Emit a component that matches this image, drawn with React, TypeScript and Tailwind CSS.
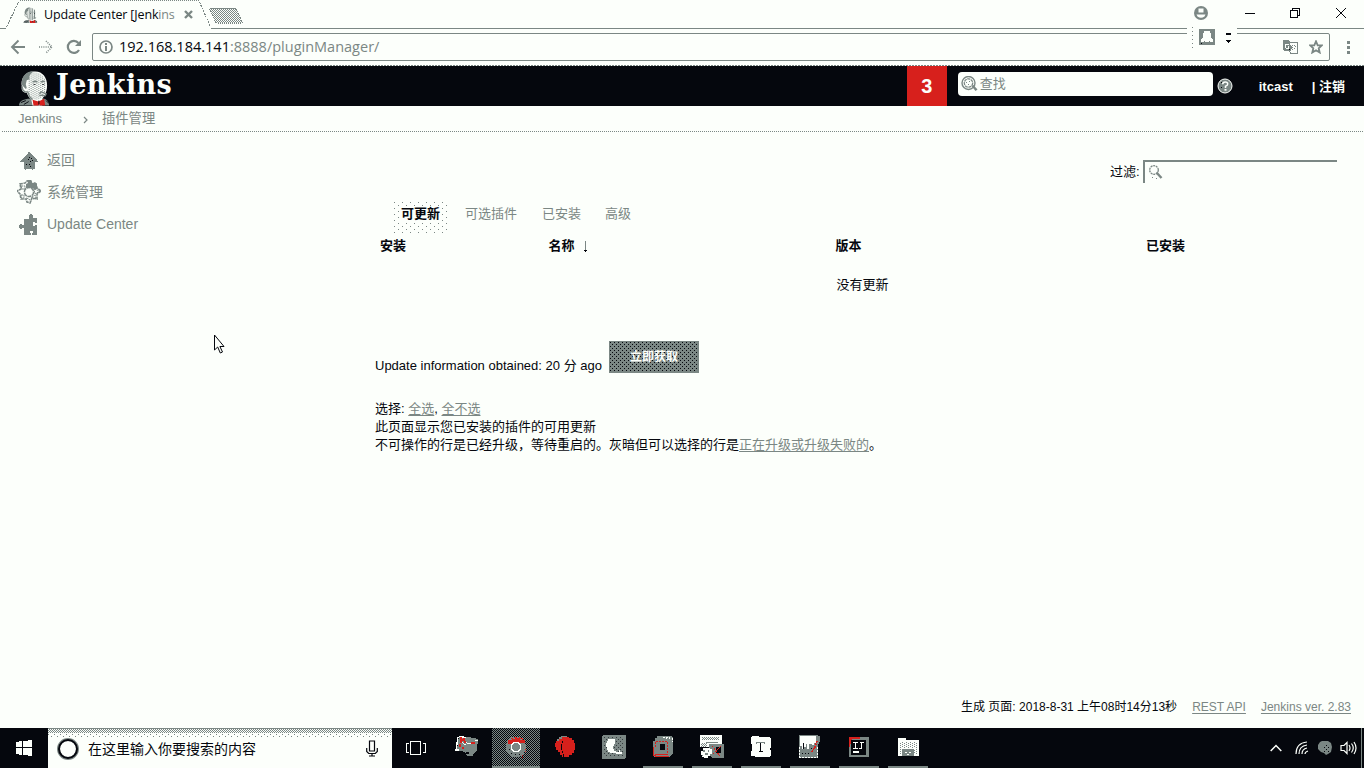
import React from "react";

const G = "#7b8784";
const W = "#fcfffb";
const K = "#05070d";
const R = "#d7201c";

function Svg({ w, h, className = "", children }: { w: number; h: number; className?: string; children: React.ReactNode }) {
  return (
    <svg width={w} height={h} viewBox={`0 0 ${w} ${h}`} fill="none" className={`block shrink-0 ${className}`}>
      {children}
    </svg>
  );
}

function Patterns() {
  return (
    <svg width="0" height="0" className="absolute">
      <defs>
        <pattern id="dotsGray" width="4" height="4" patternUnits="userSpaceOnUse">
          <path d="M0 0h1v1H0zM2 1h1v1H2zM0 2h1v1H0zM2 3h1v1H2z" fill={G} shapeRendering="crispEdges" />
        </pattern>
        <pattern id="dotsBlack" width="4" height="4" patternUnits="userSpaceOnUse">
          <path d="M0 0h1v1H0zM2 2h1v1H2z" fill={K} shapeRendering="crispEdges" />
        </pattern>
        <pattern id="check" width="2" height="2" patternUnits="userSpaceOnUse">
          <path d="M0 0h1v1H0zM1 1h1v1H1z" fill={G} shapeRendering="crispEdges" />
        </pattern>
      </defs>
    </svg>
  );
}

function TabOutline() {
  return (
    <Svg w={1364} h={29} className="absolute left-0 top-0">
      <g shapeRendering="crispEdges">
        <path d="M0 28.500H6M211 28.500H1187M1237 28.500H1364" stroke={G} />
        <path d="M20 0.500H199" stroke={G} strokeDasharray="1 1" />
        <path d="M6.500 27L18.500 2M199.500 2L210.500 27" stroke={G} strokeDasharray="2 1" />
        <path d="M211 8h23q2 0 3 2l5 11q1 2-1 2h-23q-2 0-3-2l-5-11q-1-2 1-2z" fill="url(#check)" stroke={G} strokeDasharray="1 1" />
      </g>
    </Svg>
  );
}

function Butler({ w, h, className }: { w: number; h: number; className?: string }) {
  return (
    <svg width={w} height={h} viewBox="0 0 32 36" className={`block shrink-0 ${className ?? ""}`}>
      <path d="M0 36c0-4 3-6 9-7l13-1c6 1 9 3 9 8z" fill={G} />
      <path d="M12 27l12 0 0 9H14z" fill={W} />
      <path d="M3 17C1 8 7 1 15 1c9-1 14 6 14 14 0 9-4 16-11 16-6 0-8-3-10-8-4 0-6-3-5-6z" fill={W} />
      <path d="M10 3C17-1 29 4 28 16c0 8-4 14-10 14-5 0-8-5-9-9z" fill="url(#dotsGray)" />
      <path d="M3 15C2 8 6 2 12 1l3 0C11 4 10 6 11 9l-3 1-1 4 1 4-1 1-3-3z" fill={G} />
      <path d="M3 16l1 4 2 2 3 0 2 5 3 3" stroke={G} fill="none" strokeWidth="1.500" />
      <path d="M14 12q3-2 5 0M22.500 12q3-2 4 0M21 24l2-2 5 2-1 2q-4-1-6 0" stroke={G} fill="none" strokeWidth="1.400" />
      <path d="M15 14h2v1h-2zM24 14h2v1h-2z" fill={K} />
      <path d="M2 33l5-2M5 35l5-3M28 31l3 3" stroke={K} strokeWidth="1" />
      <path d="M14 30l6 2 6-3 1 7h-5l-1-1-1 1h-5z" fill={R} />
      <path d="M20.500 31v4" stroke={K} />
    </svg>
  );
}

function BackIcon() {
  return <Svg w={16} h={16}><path d="M15 8H2M8.500 1.500L2 8l6.500 6.500" stroke={G} strokeWidth="1.900" /></Svg>;
}
function ForwardIcon() {
  return <Svg w={16} h={16}><path d="M1 8h12M8 2l6 6-6 6" stroke={G} strokeWidth="1.600" strokeDasharray="1 1.200" /></Svg>;
}
function ReloadIcon() {
  return <Svg w={16} h={16}><path d="M13 11a6 6 0 1 1-.6-7" stroke={G} strokeWidth="2.200" /><path d="M15 1v6H9z" fill={G} /></Svg>;
}
function InfoIcon() {
  return <Svg w={14} h={14}><circle cx="7" cy="7" r="6" stroke={G} strokeWidth="1.700" /><path d="M6 3h2v2H6zM6 6h2v5H6z" fill={G} /></Svg>;
}
function UserCircle() {
  return <Svg w={14} h={14}><circle cx="7" cy="7" r="7" fill={G} /><path d="M4.500 2.500h5v4h-5zM2.500 8.500h9l-1 2q-3.500 2.500-7 0z" fill={W} /></Svg>;
}
function TranslateIcon() {
  return (
    <Svg w={15} h={14} className="[shape-rendering:crispEdges]">
      <path d="M0 0h6l1 2v2l2 3-1 4H1L0 9z" fill={G} />
      <path d="M6 2.500h8v11H8l-2-3" stroke={G} />
      <path d="M5.500 4H3L2 5v2l1 1h2.500V6" stroke={W} />
      <path d="M9 5h3v2l-1 2-2 1M9 7v3" stroke={G} strokeDasharray="1 1" />
      <path d="M6 9h1v1H6z" fill={K} />
    </Svg>
  );
}
function StarIcon() {
  return <Svg w={14} h={14}><path d="M7 1.300l1.700 4H13L9.700 8.200l1 4.300L7 10.200l-3.700 2.300 1-4.300L1 5.300h4.300z" stroke={G} strokeWidth="1.800" /></Svg>;
}
function SearchOrb() {
  return (
    <Svg w={17} h={16}>
      <circle cx="7.500" cy="7" r="6.500" stroke={G} strokeWidth="1.400" />
      <circle cx="7.500" cy="7" r="4.200" stroke={G} strokeWidth="1.300" strokeDasharray="3 .6" />
      <path d="M5 6h1v1H5zM8 5h1v1H8zM7 8h1v1H7z" fill={G} />
      <path d="M10.500 10l2-1 4 4.500-2 1.500z" fill={G} />
    </Svg>
  );
}
function HelpOrb() {
  return (
    <Svg w={16} h={16}>
      <circle cx="8" cy="8" r="7" fill={G} stroke={W} strokeWidth="1" />
      <path d="M5.700 6.300q0-2.300 2.500-2.300t2.500 2q0 1.500-2.200 2.300V10" stroke={W} strokeWidth="1.500" />
      <path d="M7.500 11h2v1.700h-2z" fill={W} />
      <path d="M4 4h1v1H4zM4 9h1v1H4z" fill={K} />
    </Svg>
  );
}
function UpIcon() {
  return (
    <Svg w={18} h={18} className="[shape-rendering:crispEdges]">
      <path d="M8 0h2v1h1v1h1v1h1v1h1v1h1v1h1v1h1v2h1v1h-3v7h-2v1h-1v-1H6v1H5v-1H4v-7H0V9h1V8h1V7h1V6h1V5h1V4h1V3h1V2h1z" fill={G} />
      <path d="M9 5h1v1H9zM11 6h1v1h-1zM8 7h1v1H8zM12 8h1v1h-1zM10 9h1v1h-1zM6 12h1v1H6zM9 12h1v1H9zM10 14h1v1h-1z" fill={K} />
    </Svg>
  );
}
function GearIcon() {
  return (
    <Svg w={24} h={24}>
      <path d="M10 1h4l1 4 4-1 1 4 4 3-4 3 0 5-5-1-2 5-3-1-1-3-5 0-1-5-3-3 4-2-1-5 5-1z" stroke={G} strokeWidth="1.600" strokeDasharray="3 .6" />
      <path d="M4 6h4v3H5zM4 15h3v3H4zM15 17l3-2 1 3-3 1zM17 9l6 2-5 3zM9 18l3 1 2 3" stroke={G} strokeDasharray="2 .7" />
      <path d="M10 0h4v3h2l2-1 2 2v5h-3l-2-1h-4l-2 1V4l2-1z" fill={G} />
      <circle cx="12" cy="12" r="4.600" stroke={G} fill={W} strokeWidth="1.500" strokeDasharray="4 .7" />
    </Svg>
  );
}
function PuzzleIcon() {
  return (
    <Svg w={19} h={21} className="[shape-rendering:crispEdges]">
      <path d="M11 0h2v1h1v3h4v5h-2V8h-2v4h2v-1h2v10h-5v-2h1v-2h-3v2h1v2H5v-7H3v1H1v-1H0v-3h1v-1h2v1h2V5h5V1h1z" fill={G} />
    </Svg>
  );
}
function Lens() {
  return (
    <Svg w={14} h={15}>
      <circle cx="5" cy="5" r="4.300" stroke={G} strokeWidth="1.300" strokeDasharray="2 .7" />
      <path d="M7.500 7.500l5 5.500" stroke={G} strokeWidth="2.400" />
      <path d="M3 12h1v1H3zM7 13h1v1H7z" fill={G} />
    </Svg>
  );
}

function WindowsIcon() {
  return <Svg w={16} h={16} className="[shape-rendering:crispEdges]"><path d="M0 2l6-1v6H0zM7 1l9-1v7H7zM0 8h6v7l-6-1zM7 8h9v8l-9-1z" fill={W} /></Svg>;
}
function MicIcon() {
  return <Svg w={12} h={17}><path d="M3.500 1h5v10h-5zM.7 8v3.500l2 2h6.600l2-2V8M6 13.500V16M3 16h6" stroke={K} strokeWidth="1.200" /></Svg>;
}
function TaskViewIcon() {
  return <Svg w={20} h={14} className="[shape-rendering:crispEdges]"><path d="M4.500.5h10v13h-10zM3 2.500H.5v9H3M17 2.500h2.500v9H17" stroke={W} /></Svg>;
}

function MailApp() {
  return (
    <Svg w={24} h={24} className="[shape-rendering:crispEdges]">
      <path d="M4 1l10 1 9 2-1 11-3 3-1 3h-6l-2-4-8-2z" fill={G} />
      <path d="M3 2L1 15h3M4 1.500l7 1" stroke={W} strokeWidth="1.300" />
      <path d="M6 7l5 3M9 6l4 3 3-1M20 5h3" stroke={W} />
      <path d="M5 2h2v2h1V3h2v3h1v2H9V6H7v2H5zM4 9h2v3H4zM7 12h2v2H7zM16 7h4v2h-4z" fill={R} />
      <path d="M11 17h3v2h-3z" fill={K} />
    </Svg>
  );
}
function ChromeApp() {
  return (
    <Svg w={24} h={24} className="[shape-rendering:crispEdges]">
      <path d="M8 2h8l4 3 2 5v5l-3 5-4 2H9l-5-3-2-4V9l2-5z" fill={G} />
      <path d="M4 5h3V3h3V2h6v1h3v2h2v3H9v2H7V9H4z" fill={R} />
      <path d="M6 4h2v1H6zM9 3h2v1H9zM13 2h2v1h-2zM16 4h2v1h-2z" fill={G} />
      <path d="M21 14v4M18 20v3" stroke={R} strokeDasharray="1 1" />
      <path d="M5 14h1v1H5zM7 18h1v1H7zM11 19h1v1h-1zM15 19h1v1h-1z" fill={K} />
      <circle cx="12" cy="12" r="4.700" stroke={W} strokeWidth="1.500" fill={G} />
    </Svg>
  );
}
function RedApp() {
  return (
    <Svg w={24} h={24} className="[shape-rendering:crispEdges]">
      <path d="M8 1h6v2h-4v1H8v2H4V4h2V2h2z" fill={G} />
      <path d="M2 8h1V6h3V4h3V2h7v1h3v2h2v3h1v7h-1v3h-2v2h-3v2H9v-2H7v-3H5v-2H3v-3H2z" fill={R} />
      <path d="M9 6v2M8 9v6M9 16v2M10.500 19v3M6 17v2M4 15v1" stroke={K} />
    </Svg>
  );
}
function NoteApp() {
  return (
    <Svg w={24} h={24} className="[shape-rendering:crispEdges]">
      <rect width="24" height="24" rx="2" fill={G} />
      <path d="M2 2h20v20H2z" fill="url(#dotsBlack)" opacity=".6" />
      <path d="M6 4h7v5h-1v2h-1v3h1v2h2v2H8v-1H6v-2H5v-3H4V8h1V6h1z" fill={W} />
      <path d="M14 17h3v-2h1v2h2v2h-6z" fill={W} />
    </Svg>
  );
}
function CubeApp() {
  return (
    <Svg w={24} h={24} className="[shape-rendering:crispEdges]">
      <path d="M6 1h15l1 2v15l-4 4H3l-1-3V6h2V3h2z" fill={G} />
      <path d="M12 2.500h7M15.500 2v3M18.500 2v3M21 3v4" stroke={W} strokeDasharray="2 1" />
      <path d="M4.500 6.500h12v13M4.500 7v5" stroke={R} strokeDasharray="2 1" />
      <path d="M9 9h5v6H9z" fill={K} />
      <path d="M2.500 12v8h2v1.500h13M4 19.500h13" stroke={R} />
    </Svg>
  );
}
function ToolsApp() {
  return (
    <Svg w={24} h={24} className="[shape-rendering:crispEdges]">
      <path d="M0 0h22v9H0zM0 9h10v3H0z" fill={W} />
      <path d="M2 2h17v3H2zM1 8h6v4H1z" fill="url(#check)" />
      <path d="M6 7h12" stroke={G} />
      <path d="M9 9h15v14H12l-3-3z" fill={G} />
      <path d="M3 13h7v1h2v5h-2v2H8v2H4v-1H2v-2H1v-4h2z" fill={W} />
      <path d="M3 15h2v2H3zM8 15h1v2H8zM5 18h3v2H5zM2 20h1v1H2z" fill={G} />
      <path d="M16 12h5v6h-5z" fill={K} />
      <path d="M12 11l8 10M13 19l8-8" stroke={R} strokeDasharray="2 1" />
    </Svg>
  );
}
function TyporaApp() {
  return (
    <Svg w={24} h={24} className="[shape-rendering:crispEdges]">
      <path d="M3 1h7v1h11v1h1v10h-1v2h1v6h-1v1H6v-1H2v-5h1V9H2V2h1z" fill={W} />
      <path d="M7 7.500h9M7.500 7v2M15.500 7v2" stroke={G} />
      <path d="M11.500 8v8M10 16.500h4" stroke={K} />
    </Svg>
  );
}
function NotebookApp() {
  return (
    <Svg w={24} h={24} className="[shape-rendering:crispEdges]">
      <path d="M1 0h19v23H1z" fill={G} />
      <path d="M2 1h16v7h-2v2h-2V9h-3v5H9V9H8v3H6v2H4v-3H2z" fill={W} />
      <path d="M1.500 12v10h18V9" stroke={W} strokeDasharray="2 1" />
      <path d="M5.500 8v6M4 18.500h1M7 18.500h1M10 18.500h1M13 13.500h1" stroke={K} />
      <path d="M21.500 1l-1 6-4 9" stroke={G} strokeWidth="2" />
      <path d="M19 6l-2 6-3 5" stroke={R} strokeWidth="1.500" strokeDasharray="2 .6" />
    </Svg>
  );
}
function IdeaApp() {
  return (
    <Svg w={24} h={24} className="[shape-rendering:crispEdges]">
      <path d="M2 2h20v20H2z" fill={G} />
      <path d="M2 2h11v2H5v5H3v3H2z" fill={R} />
      <path d="M4 5h15v15H4z" fill={K} />
      <path d="M6 7.500h5M8.500 7v6M6 13.500h5M14.500 7v6M12 13.500h3M13 7.500h4" stroke={W} />
      <path d="M6 16h6v2H6z" fill={W} />
    </Svg>
  );
}
function FolderApp() {
  return (
    <Svg w={24} h={24} className="[shape-rendering:crispEdges]">
      <path d="M2 3h8v2h13v16H2z" fill={W} />
      <path d="M3 7h19v6H3zM3 14h3v5H3zM18 14h4v5h-4z" fill="url(#dotsGray)" />
      <path d="M6 14h12v7H6z" fill={G} />
      <path d="M9 17h2v1H9zM13 17h2v1h-2zM11 19h2v1h-2z" fill={W} />
    </Svg>
  );
}

const apps: { icon: () => React.ReactElement; state: string }[] = [
  { icon: MailApp, state: "" },
  { icon: ChromeApp, state: "active" },
  { icon: RedApp, state: "" },
  { icon: NoteApp, state: "" },
  { icon: CubeApp, state: "open" },
  { icon: ToolsApp, state: "open" },
  { icon: TyporaApp, state: "open" },
  { icon: NotebookApp, state: "open" },
  { icon: IdeaApp, state: "open" },
  { icon: FolderApp, state: "open" },
];

function BrowserChrome() {
  return (
    <header className="relative">
      <TabOutline />
      <div className="flex h-[29px] items-center pl-[23px] font-['Open_Sans','Noto_Sans_CJK_SC',sans-serif]">
        <Butler w={15} h={16} />
        <span className="ml-[6px] w-[132px] text-[12.500px] tracking-[-0.150px] whitespace-nowrap text-[#05070d]">
          Update Center [Jenk<span className="text-[#7b8784]">ins</span>
        </span>
        <Svg w={9} h={9} className="ml-[8px]"><path d="M1 1l7 7M8 1L1 8" stroke={G} strokeWidth="2.400" /></Svg>
        <div className="ml-auto flex items-center pb-[3px]">
          <UserCircle />
          <Svg w={10} h={10} className="ml-[37px]"><path d="M0 5.500h10" stroke={K} /></Svg>
          <Svg w={10} h={10} className="ml-[35px] [shape-rendering:crispEdges]"><path d="M.5 2.500h7v7h-7zM2.500 2.500v-2h7v7h-2" stroke={K} /></Svg>
          <Svg w={10} h={10} className="mr-[18px] ml-[36px]"><path d="M0 0l10 10M10 0L0 10" stroke={K} /></Svg>
        </div>
      </div>
      <div className="flex h-[36px] items-center pl-[10px] font-['Open_Sans','Noto_Sans_CJK_SC',sans-serif]">
        <BackIcon />
        <div className="ml-[12px]"><ForwardIcon /></div>
        <div className="ml-[12px]"><ReloadIcon /></div>
        <div className="ml-[10px] flex h-[28px] w-[1238px] items-center rounded-[2px] border border-[#7b8784] pl-[6px]">
          <InfoIcon />
          <span className="ml-[6px] pb-px text-[14.500px] whitespace-nowrap text-[#7b8784]">
            <span className="text-[#05070d]">192.168.184.141</span>:8888/pluginManager/
          </span>
          <div className="mr-[6px] ml-auto flex items-center gap-[11px]"><TranslateIcon /><StarIcon /></div>
        </div>
        <Svg w={3} h={13} className="ml-[17px]"><path d="M0 0h3v3H0zM0 5h3v3H0zM0 10h3v3H0z" fill={G} /></Svg>
      </div>
      <div className="h-px bg-[repeating-linear-gradient(90deg,#7b8784_0_2px,#fcfffb_2px_3px)]" />
      <div className="absolute top-[27px] left-[1187px] flex h-[22px] w-[50px] items-start bg-[#fcfffb] pl-[5px]">
        <span className="h-[22px] w-px bg-[repeating-linear-gradient(#7b8784_0_1px,#fcfffb_1px_4px)]" />
        <Svg w={16} h={17} className="mt-[2px] ml-[6px] [shape-rendering:crispEdges]">
          <rect width="16" height="16" rx="1" fill={G} />
          <path d="M5 2h6v2h1v5h1v1h1v3h-3v-1h-1v1H6v-1H5v1H2v-3h1V9h1V4h1z" fill={W} />
          <path d="M2 14h1v1H2z" fill={K} />
        </Svg>
        <Svg w={5} h={10} className="mt-[6px] ml-[11px] [shape-rendering:crispEdges]"><path d="M0 0h5v2H0zM0 7h5v1H4v1H3v1H2V9H1V8H0z" fill={K} /></Svg>
      </div>
    </header>
  );
}

function JenkinsHeader() {
  return (
    <div className="flex h-[40px] bg-[#05070d] text-[#fcfffb]">
      <Butler w={31} h={36} className="mt-[4px] ml-[19px]" />
      <span className="ml-[6px] h-[38px] font-['DejaVu_Serif',serif] text-[27px] leading-[38px] font-bold tracking-[0.400px]">Jenkins</span>
      <div className="ml-auto flex h-[40px] w-[40px] items-center justify-center bg-[#d7201c] text-[20px] font-bold">3</div>
      <div className="mt-[6px] ml-[11px] flex h-[24px] w-[255px] items-center rounded-[4px] bg-[#fcfffb] pl-[3px] text-[13px] text-[#7b8784]">
        <SearchOrb />
        <span className="ml-[2px]">查找</span>
      </div>
      <div className="mt-[12px] ml-[4px]"><HelpOrb /></div>
      <span className="ml-[26px] w-[35px] text-[13px] leading-[41px] font-bold whitespace-nowrap">itcast</span>
      <span className="mr-[19px] ml-[18px] text-[13px] leading-[41px] font-bold whitespace-nowrap">| 注销</span>
    </div>
  );
}

function Taskbar() {
  return (
    <footer className="flex h-[40px] bg-[#05070d]">
      <div className="flex w-[48px] items-center justify-center"><WindowsIcon /></div>
      <div className="flex w-[344px] flex-col bg-[#fcfffb]">
        <div className="h-px bg-[#7b8784]" />
        <div className="h-[4px] bg-[conic-gradient(#7b8784_25%,#fcfffb_0_50%,#7b8784_0_75%,#fcfffb_0)] bg-[length:2px_2px]" />
        <div className="h-[4px] bg-[conic-gradient(from_270deg_at_1px_1px,#7b8784_90deg,transparent_0),conic-gradient(from_270deg_at_1px_1px,#7b8784_90deg,transparent_0)] bg-[length:6px_4px] bg-[position:0_1px,3px_3px]" />
        <div className="flex h-[23px] items-center pl-[8px]">
          <Svg w={24} h={24}><circle cx="12" cy="12" r="9.500" stroke={G} strokeWidth="3" /><circle cx="12" cy="12" r="9" stroke={K} strokeWidth="2" /></Svg>
          <span className="ml-[8px] text-[14px] text-[#05070d]">在这里输入你要搜索的内容</span>
          <div className="mr-[14px] ml-auto"><MicIcon /></div>
        </div>
      </div>
      <div className="flex w-[51px] items-center pl-[14px]"><TaskViewIcon /></div>
      {apps.map(({ icon: Icon, state }, i) => (
        <div
          key={i}
          className={
            "mr-px flex h-[40px] w-[48px] flex-col items-center " +
            (state === "active" ? "bg-[conic-gradient(#7b8784_25%,#05070d_0_50%,#7b8784_0_75%,#05070d_0)] bg-[length:2px_2px]" : "")
          }
        >
          <div className="flex h-[38px] items-center"><Icon /></div>
          <div className={"h-[2px] " + (state === "active" ? "w-full bg-[#7b8784]" : state === "open" ? "w-[40px] bg-[#7b8784]" : "w-0")} />
        </div>
      ))}
      <div className="ml-auto flex items-center">
        <Svg w={12} h={8}><path d="M.7 7L6 1.500 11.300 7" stroke={W} strokeWidth="1.500" /></Svg>
        <Svg w={14} h={14} className="ml-[13px]">
          <path d="M1 13Q1 2 12 1M4 13q0-8 8-9M7 13q0-5 5-6M10 13q0-2 3-3" stroke={W} strokeWidth="1.200" />
        </Svg>
        <Svg w={14} h={14} className="ml-[9px]">
          <path d="M4 0h6l3 2 1 4-1 5-3 2-2 1-2-2-3-1-3-3V4l2-3z" fill={G} /><path d="M5 4h6v7H5z" fill="url(#dotsBlack)" />
        </Svg>
        <Svg w={17} h={14} className="ml-[8px]">
          <path d="M1 4.500h3l3-3v11l-3-3H1zM9 4q2 3 0 6M11.500 2.500q3.500 4.500 0 9M14 1q4 6 0 12" stroke={W} strokeWidth="1.200" />
        </Svg>
        <div className="mr-[2px] ml-[4px] h-[40px] w-px bg-[#7b8784]" />
      </div>
    </footer>
  );
}

export default function App() {
  return (
    <div className="flex h-[768px] w-[1364px] flex-col overflow-hidden bg-[#fcfffb] font-['Liberation_Sans','Noto_Sans_CJK_SC',sans-serif] text-[13px] leading-[18px] text-[#05070d]">
      <Patterns />
      <BrowserChrome />
      <JenkinsHeader />
      <nav className="flex h-[25px] items-center pl-[18px] text-[13px] text-[#7b8784]">
        <span className="w-[65px]">Jenkins</span>
        <Svg w={5} h={8} className="mt-[2px]"><path d="M1 1l3 3-3 3" stroke={G} strokeWidth="1.200" /></Svg>
        <span className="ml-[14px] text-[13.300px]">插件管理</span>
      </nav>
      <div className="ml-[2px] h-px bg-[repeating-linear-gradient(90deg,#7b8784_0_1px,#fcfffb_1px_2px)]" />
      <div className="flex min-h-0 flex-1">
        <aside className="flex w-[375px] flex-col pt-[12px] text-[14px] text-[#7b8784]">
          <div className="flex h-[32px] items-center"><span className="flex w-[47px] pt-[2px] pl-[20px]"><UpIcon /></span>返回</div>
          <div className="flex h-[32px] items-center"><span className="flex w-[47px] pl-[17px]"><GearIcon /></span>系统管理</div>
          <div className="flex h-[32px] items-center"><span className="flex w-[47px] pl-[19px]"><PuzzleIcon /></span>Update Center</div>
          <Svg w={12} h={20} className="mt-[94px] ml-[213px]">
            <path d="M1.500 1v15l3.200-3 2.600 6 2.200-1-2.600-5.500H11z" fill={W} stroke={K} />
          </Svg>
        </aside>
        <main className="flex flex-1 flex-col">
          <div className="flex pt-[28px] pl-[735px]">
            <span className="w-[33px] pt-[3px] text-[13px]">过滤:</span>
            <div className="h-[23px] w-[194px] border-t-2 border-l-2 border-[#7b8784] pt-[3px] pl-[4px]"><Lens /></div>
          </div>
          <div className="mt-[18px] flex h-[33px] pl-[17px] leading-[26px] text-[#7b8784]">
            <span className="flex w-[57px] justify-center bg-[conic-gradient(from_270deg_at_1px_1px,#7b8784_90deg,transparent_0),conic-gradient(from_270deg_at_1px_1px,#7b8784_90deg,transparent_0)] bg-[length:8px_6px] bg-[position:2px_1px,6px_4px] font-bold text-[#05070d]">
              <span className="mt-[5px] h-[16px] bg-[#fcfffb] leading-[16px]">可更新</span>
            </span>
            <span className="ml-[16px]">可选插件</span>
            <span className="ml-[25px]">已安装</span>
            <span className="ml-[24px]">高级</span>
          </div>
          <div className="mt-[3px] flex font-bold">
            <span className="w-[173.500px] pl-[5px]">安装</span>
            <span className="flex w-[287px] items-center">名称
              <Svg w={5} h={12} className="mt-[2px] ml-[8px] [shape-rendering:crispEdges]"><path d="M2 0h1v9H2z" fill={G} /><path d="M1 9h3v1H3v1H2v-1H1z" fill={K} /></Svg>
            </span>
            <span className="w-[310.500px]">版本</span>
            <span>已安装</span>
          </div>
          <div className="mt-[21px] pl-[461.500px]">没有更新</div>
          <div className="mt-[47px] flex h-[34px]">
            <span className="w-[234px] pt-[16px] whitespace-nowrap">Update information obtained: 20 分 ago</span>
            <button className="h-[32px] w-[90px] border border-[#7b8784] bg-[#7b8784] bg-[conic-gradient(from_270deg_at_1px_1px,#05070d_90deg,transparent_0),conic-gradient(from_270deg_at_1px_1px,#05070d_90deg,transparent_0)] bg-[length:4px_4px] bg-[position:0_0,2px_2px] text-[12px] font-bold text-[#fcfffb]">立即获取</button>
          </div>
          <div className="mt-[25px]">
            <p>选择: <a className="text-[#7b8784] underline underline-offset-2">全选</a>, <a className="text-[#7b8784] underline underline-offset-2">全不选</a></p>
            <p>此页面显示您已安装的插件的可用更新</p>
            <p>不可操作的行是已经升级，等待重启的。灰暗但可以选择的行是<a className="text-[#7b8784] underline underline-offset-2">正在升级或升级失败的</a>。</p>
          </div>
          <div className="mt-auto mb-[12px] flex justify-end pr-[13px] text-[12px]">
            <span>生成 页面: 2018-8-31 上午08时14分13秒</span>
            <a className="ml-[15px] text-[#7b8784] underline underline-offset-2">REST API</a>
            <a className="ml-[15px] text-[#7b8784] underline underline-offset-2">Jenkins ver. 2.83</a>
          </div>
        </main>
      </div>
      <Taskbar />
    </div>
  );
}
